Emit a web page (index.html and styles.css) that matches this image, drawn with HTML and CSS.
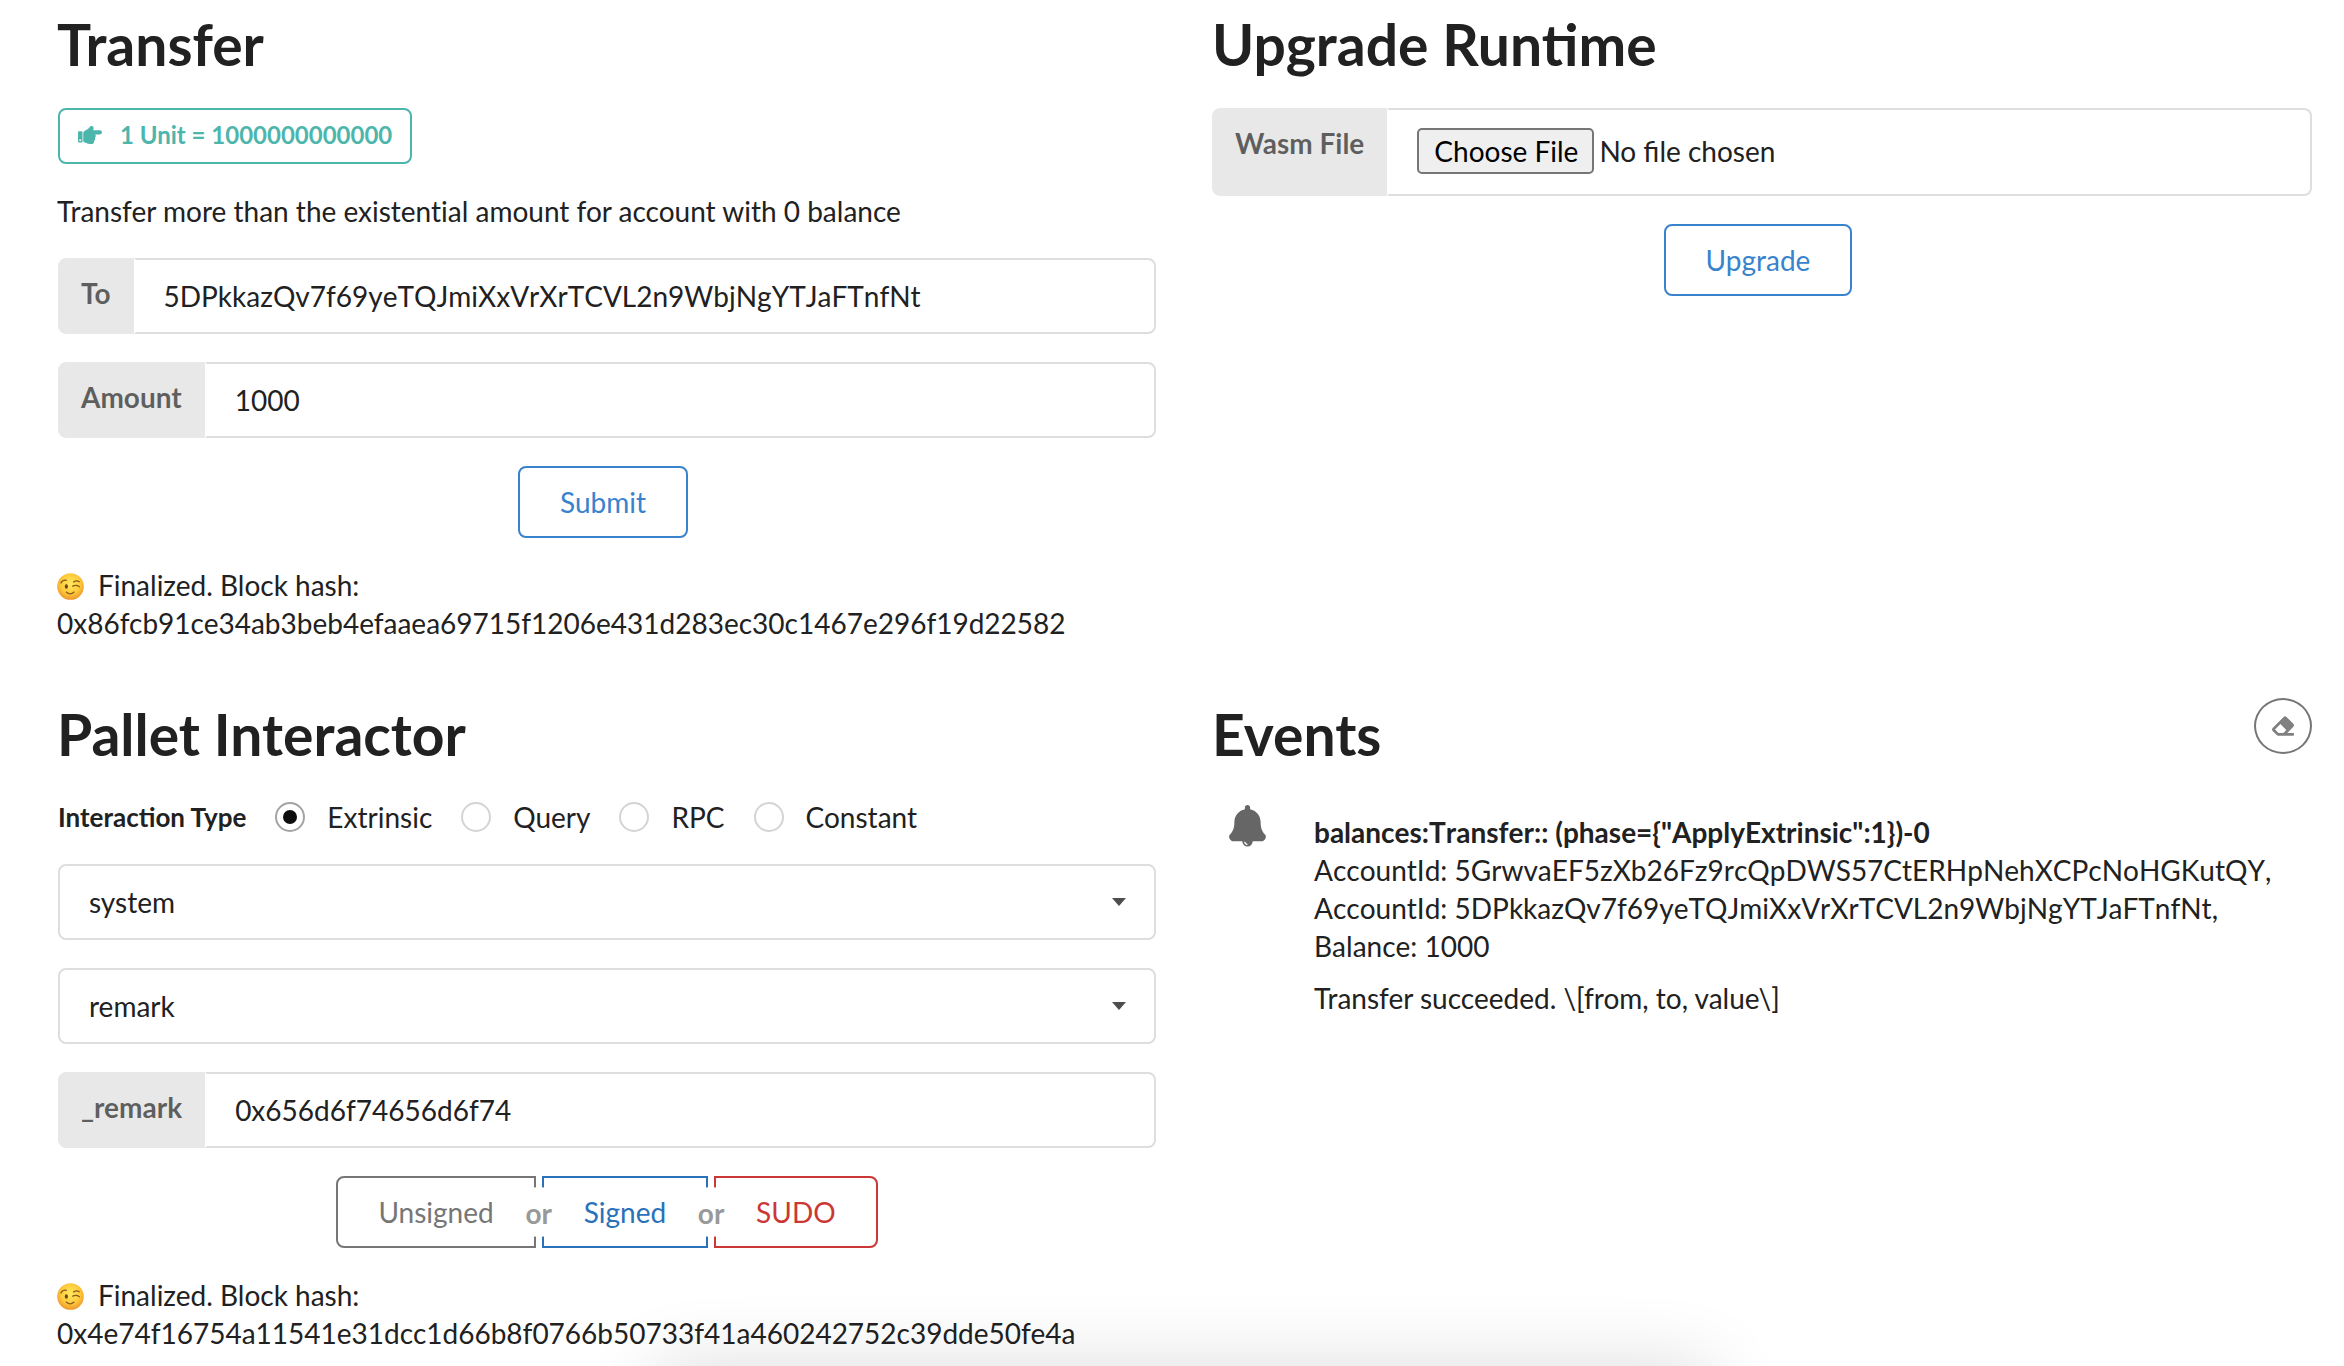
FILE: index.html
```
<!DOCTYPE html>
<html lang="en">
<head>
<meta charset="utf-8">
<meta name="viewport" content="width=device-width, initial-scale=1">
<title>Substrate Front End</title>
<link rel="stylesheet" href="styles.css">
</head>
<body>
<svg class="defs" aria-hidden="true">
  <defs>
    <radialGradient id="face" cx="50%" cy="40%" r="60%">
      <stop offset="0" stop-color="#ffe95e"/>
      <stop offset="0.6" stop-color="#fdcb3b"/>
      <stop offset="1" stop-color="#ee962c"/>
    </radialGradient>
    <symbol id="wink" viewBox="0 0 26 26">
      <circle cx="13" cy="13" r="12.8" fill="url(#face)"/>
      <ellipse cx="9" cy="13" rx="1.5" ry="2.2" fill="#6b4318"/>
      <path d="M3.8 9.6Q5.6 6.4 8.8 7M15.2 12.7Q18.4 11 21.6 13.2M16 8.6Q18.6 6.6 21.4 8.4M9 18.4Q12.6 21.8 16.4 18.4" fill="none" stroke="#8a5a1e" stroke-width="1.3" stroke-linecap="round"/>
    </symbol>
  </defs>
</svg>
<main class="page">
  <section class="panel panel-left">
    <h1>Transfer</h1>
    <div class="tag">
      <svg class="tag-icon" viewBox="0 0 512 512" aria-hidden="true"><path fill="currentColor" d="M512 199.652c0 23.625-20.65 43.826-44.8 43.826h-99.851c16.34 17.048 18.346 49.766-6.299 70.944 14.288 22.829 2.147 53.017-16.45 62.315C353.574 425.878 322.654 448 272 448c-2.746 0-13.276-.203-16-.195-61.971.168-76.894-31.065-123.731-38.315C120.596 407.683 112 397.599 112 385.786V214.261l.002-.001c.011-18.366 10.607-35.889 28.464-43.845 28.886-12.994 95.413-49.038 107.534-77.323 7.797-18.194 21.384-29.084 40-29.092 34.222-.014 57.752 35.098 44.119 66.908-3.583 8.359-8.312 16.67-14.153 24.918H467.2c23.45 0 44.8 20.543 44.8 43.826zM96 200v192c0 13.255-10.745 24-24 24H24c-13.255 0-24-10.745-24-24V200c0-13.255 10.745-24 24-24h48c13.255 0 24 10.745 24 24zM68 368c0-11.046-8.954-20-20-20s-20 8.954-20 20 8.954 20 20 20 20-8.954 20-20z"/></svg>
      <span>1 Unit = 1000000000000</span>
    </div>
    <p class="hint">Transfer more than the existential amount for account with 0 balance</p>
    <form class="form">
      <div class="field">
        <label for="to">To</label>
        <input class="address" id="to" type="text" value="5DPkkazQv7f69yeTQJmiXxVrXrTCVL2n9WbjNgYTJaFTnfNt" spellcheck="false">
      </div>
      <div class="field">
        <label for="amount">Amount</label>
        <input id="amount" type="text" value="1000">
      </div>
      <div class="actions"><button class="btn" type="button">Submit</button></div>
    </form>
    <p class="status"><svg class="emoji" role="img" aria-label="winking face"><use href="#wink"/></svg>Finalized. Block hash:<br>0x86fcb91ce34ab3beb4efaaea69715f1206e431d283ec30c1467e296f19d22582</p>
  </section>

  <section class="panel">
    <h1>Upgrade Runtime</h1>
    <form class="form">
      <div class="field">
        <label for="wasm">Wasm File</label>
        <input id="wasm" type="file">
      </div>
      <div class="actions"><button class="btn" type="button">Upgrade</button></div>
    </form>
  </section>

  <section class="panel panel-left">
    <h1>Pallet Interactor</h1>
    <form class="form">
      <div class="choices" role="radiogroup" aria-labelledby="kind">
        <span class="choices-title" id="kind">Interaction Type</span>
        <label class="choice"><input type="radio" name="kind" checked>Extrinsic</label>
        <label class="choice"><input type="radio" name="kind">Query</label>
        <label class="choice"><input type="radio" name="kind">RPC</label>
        <label class="choice"><input type="radio" name="kind">Constant</label>
      </div>
      <div class="dropdown">
        <select aria-label="Pallet"><option>system</option></select>
      </div>
      <div class="dropdown">
        <select aria-label="Callable"><option>remark</option></select>
      </div>
      <div class="field">
        <label for="remark">_remark</label>
        <input id="remark" type="text" value="0x656d6f74656d6f74" spellcheck="false">
      </div>
      <div class="button-group">
        <button class="btn btn-grey" type="button">Unsigned</button>
        <span class="or">or</span>
        <button class="btn btn-blue" type="button">Signed</button>
        <span class="or">or</span>
        <button class="btn btn-red" type="button">SUDO</button>
      </div>
    </form>
    <p class="status"><svg class="emoji" role="img" aria-label="winking face"><use href="#wink"/></svg>Finalized. Block hash:<br>0x4e74f16754a11541e31dcc1d66b8f0766b50733f41a460242752c39dde50fe4a</p>
  </section>

  <section class="panel">
    <div class="panel-head">
      <h1>Events</h1>
      <button class="clear" type="button" aria-label="Clear events">
        <svg viewBox="0 0 512 512" aria-hidden="true"><path fill="currentColor" d="M497.941 273.941c18.745-18.745 18.745-49.137 0-67.882l-160-160c-18.745-18.745-49.136-18.746-67.883 0l-256 256c-18.745 18.745-18.745 49.137 0 67.882l96 96A48.004 48.004 0 0 0 144 480h356c6.627 0 12-5.373 12-12v-40c0-6.627-5.373-12-12-12H355.883l142.058-142.059zm-302.627-62.627l137.373 137.373L265.373 416H150.628l-80-80 124.686-124.686z"/></svg>
      </button>
    </div>
    <article class="event">
      <svg class="bell" viewBox="0 0 448 512" aria-hidden="true"><path fill="currentColor" d="M439.39 362.29c-19.32-20.76-55.47-51.99-55.47-154.29 0-77.7-54.48-139.9-127.94-155.16V32c0-17.67-14.32-32-31.98-32s-31.98 14.33-31.98 32v20.84C118.56 68.1 64.08 130.3 64.08 208c0 102.3-36.15 133.53-55.47 154.29-6 6.45-8.66 14.16-8.61 21.71 0 32 24 58 56 58h336c32 0 56-26 56-58 .05-7.55-2.61-15.27-8.61-21.71z"/><path fill="currentColor" fill-rule="evenodd" d="M160 440a64 66 0 0 0 128 0zM180 448q6 36 40 42l6-14q-24-6-30-28z"/></svg>
      <div class="event-body">
        <strong class="address">balances:Transfer:: (phase={"ApplyExtrinsic":1})-0</strong>
        <span class="address">AccountId: 5GrwvaEF5zXb26Fz9rcQpDWS57CtERHpNehXCPcNoHGKutQY, AccountId: 5DPkkazQv7f69yeTQJmiXxVrXrTCVL2n9WbjNgYTJaFTnfNt, Balance: 1000</span>
        <p>Transfer succeeded. \[from, to, value\]</p>
      </div>
    </article>
  </section>
</main>
<div class="shade" aria-hidden="true"></div>
</body>
</html>
```
FILE: styles.css
```
* {
  box-sizing: border-box;
}

html {
  overflow: hidden;
}

body {
  margin: 0;
  background: #fff;
  color: #212121;
  font: 28px/38px Lato, "Liberation Sans", sans-serif;
}

.defs {
  position: absolute;
  width: 0;
  height: 0;
}

.page {
  display: grid;
  grid-template-columns: 1fr 1fr;
  column-gap: 55px;
  row-gap: 56px;
  padding: 8px 32px 0 57px;
}

.panel-left .form {
  padding: 0 1px;
}

h1 {
  margin: 0;
  font-size: 57px;
  line-height: 72px;
  font-weight: 700;
}

.tag {
  display: inline-flex;
  align-items: center;
  height: 56px;
  margin-top: 28px;
  margin-left: 1px;
  padding: 0 18px 2px 18px;
  border: 2px solid #4db6ac;
  border-radius: 8px;
  color: #4db6ac;
  font-size: 24px;
  font-weight: 700;
}

.tag-icon {
  width: 24px;
  height: 24px;
  margin-right: 18px;
}

.hint {
  margin: 28px 0;
  font-variant-ligatures: no-common-ligatures;
}

.form {
  display: grid;
  gap: 28px;
  margin-top: 28px;
}

.field {
  display: flex;
  min-height: 76px;
}

.field label {
  padding: 15px 22px;
  border: 1px solid #e8e8e8;
  border-radius: 8px 0 0 8px;
  background: #e8e8e8;
  color: rgba(0, 0, 0, 0.6);
  font-weight: 700;
}

.field input {
  flex: 1;
  min-width: 0;
  padding: 0 28px;
  border: 2px solid #dededf;
  border-left-color: transparent;
  border-radius: 0 8px 8px 0;
  background: #fff;
  color: #212121;
  font: inherit;
}

.field .address,
.address {
  font-kerning: none;
}

.field input[type="file"] {
  height: 88px;
  padding: 18px 28px;
}

.field input::file-selector-button {
  height: 46px;
  margin: 0 5px 0 0;
  padding: 0 14px 0 15px;
  border: 2px solid #767676;
  border-radius: 5px;
  background: #efefef;
  color: #000;
  font: inherit;
}

.actions {
  display: flex;
  justify-content: center;
  padding-right: 8px;
}

.btn {
  height: 72px;
  padding: 0 40px;
  border: 2px solid #3983cd;
  border-radius: 8px;
  background: #fff;
  color: #3983cd;
  font: inherit;
}

.status {
  margin: 28px 0 0;
  overflow-wrap: anywhere;
}

.emoji {
  width: 27px;
  height: 27px;
  margin-right: 14px;
  vertical-align: -4px;
}

.choices {
  display: flex;
  align-items: center;
  gap: 29px;
  height: 38px;
}

.choices-title {
  font-size: 26px;
  font-weight: 700;
}

.choice {
  display: flex;
  align-items: center;
}

.choice input {
  appearance: none;
  display: grid;
  place-items: center;
  width: 30px;
  height: 30px;
  margin: 0 22px 0 0;
  border: 2px solid #d4d4d5;
  border-radius: 50%;
  background: #fff;
}

.choice input:checked {
  border-color: #a3a3a3;
}

.choice input:checked::before {
  content: "";
  width: 14px;
  height: 14px;
  border-radius: 50%;
  background: #0d0d0d;
}

.dropdown {
  display: grid;
  align-items: center;
}

.dropdown select,
.dropdown::after {
  grid-area: 1 / 1;
}

.dropdown select {
  appearance: none;
  width: 100%;
  height: 76px;
  padding: 0 29px;
  border: 2px solid #dededf;
  border-radius: 8px;
  background: #fff;
  color: #212121;
  font: inherit;
}

.dropdown::after {
  content: "";
  z-index: 1;
  justify-self: end;
  width: 14px;
  height: 8px;
  margin-right: 30px;
  background: #4d4d4d;
  clip-path: polygon(0 0, 100% 0, 50% 100%);
  pointer-events: none;
}

.button-group {
  display: flex;
  justify-content: center;
}

.button-group .btn {
  border-radius: 0;
}

.button-group .btn:first-child {
  border-radius: 8px 0 0 8px;
}

.button-group .btn:last-child {
  border-radius: 0 8px 8px 0;
}

.btn-grey {
  border-color: #767676;
  color: #767676;
}

.btn-blue {
  border-color: #2a71b9;
  color: #2a71b9;
}

.btn-red {
  border-color: #cb3735;
  color: #cb3735;
}

.or {
  z-index: 1;
  align-self: center;
  width: 50px;
  height: 50px;
  margin: 0 -22px;
  border-radius: 50%;
  background: #fff;
  color: #999;
  font-weight: 700;
  line-height: 52px;
  text-align: center;
}

.panel-head {
  display: flex;
  justify-content: space-between;
  align-items: flex-start;
}

.clear {
  display: grid;
  place-items: center;
  width: 58px;
  height: 56px;
  padding: 0;
  border: 2px solid #767676;
  border-radius: 50%;
  background: #fff;
  color: #808080;
}

.clear svg {
  width: 22px;
  height: 22px;
}

.event {
  display: flex;
  align-items: flex-start;
  gap: 48px;
  padding: 35px 14px 0 17px;
}

.bell {
  flex: none;
  width: 37px;
  height: 42px;
  color: #666;
}

.event-body {
  display: grid;
  margin-top: 8px;
}

.event-body p {
  margin: 14px 0 0;
}

.shade {
  position: fixed;
  left: 28%;
  right: 27%;
  bottom: -120px;
  height: 120px;
  box-shadow: 0 0 76px rgba(0, 0, 0, 0.14);
  pointer-events: none;
}
```
